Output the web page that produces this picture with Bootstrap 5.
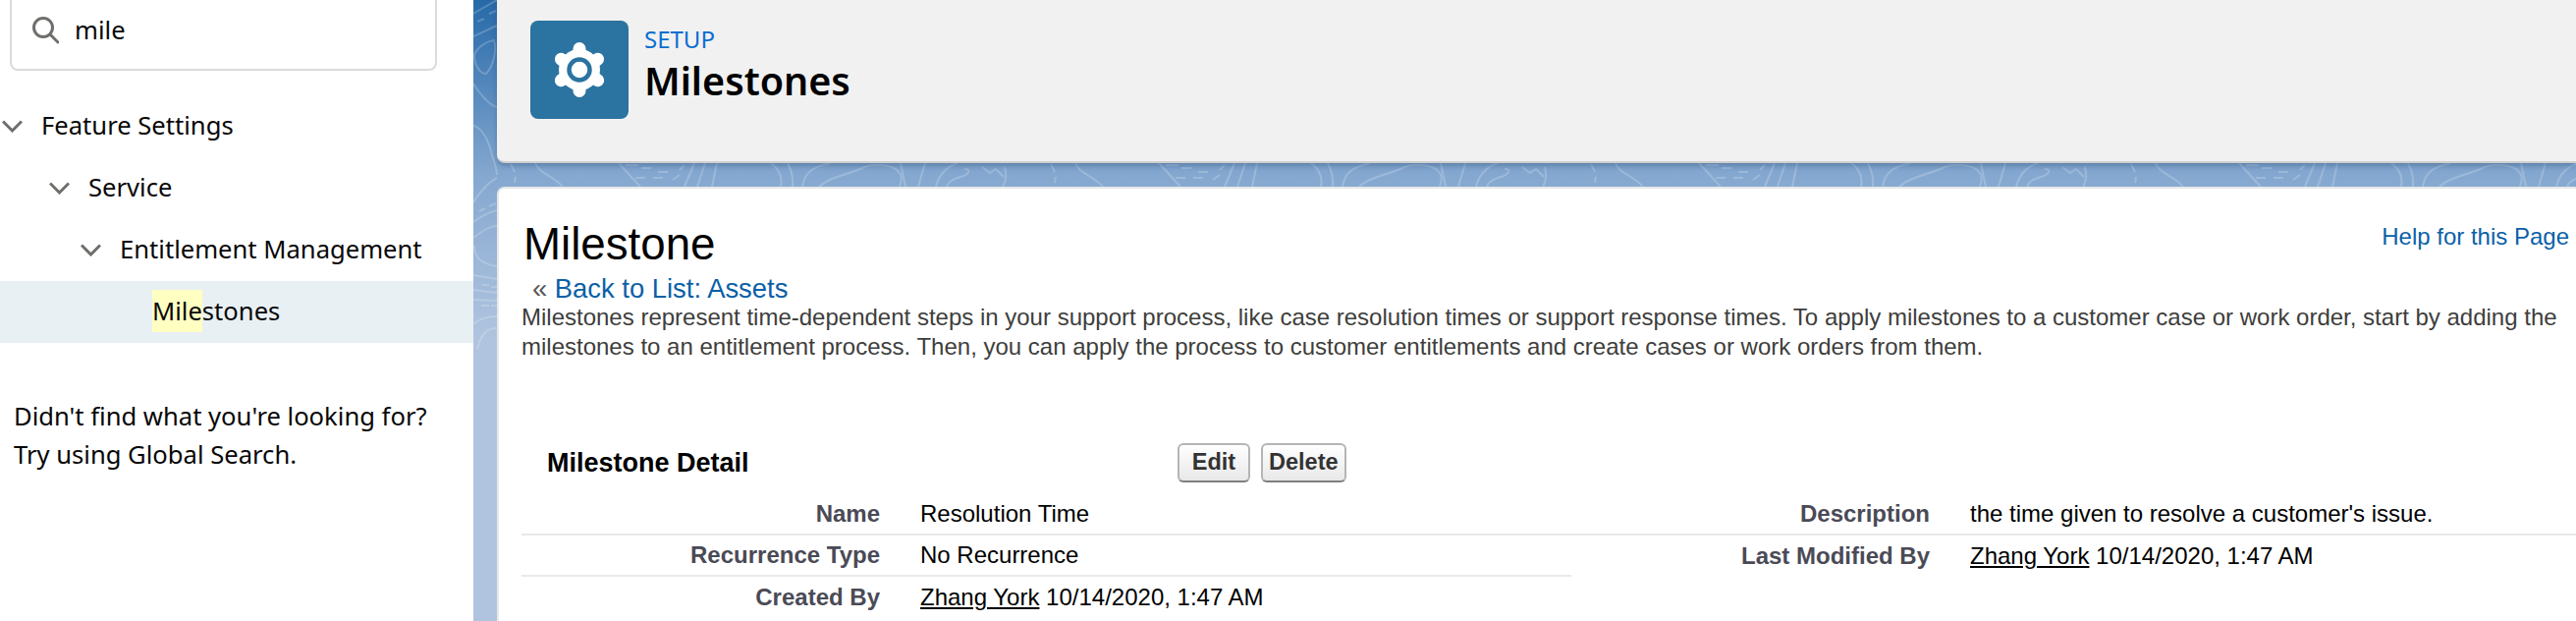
<!DOCTYPE html>
<html lang="en">
<head>
<meta charset="UTF-8">
<title>Milestones</title>
<link href="https://cdn.jsdelivr.net/npm/bootstrap@5.3.0/dist/css/bootstrap.min.css" rel="stylesheet">
<style>
html, body { height: 632px; overflow: hidden; background: #fff; }
body { font-family: "Noto Sans", sans-serif; color: #080707; }

/* left setup tree */
.side-panel { width: 482px; height: 632px; flex: none; font-size: 25.6px; overflow: hidden; }
.search-box { margin: -10px 37px 0 10px; height: 82px; border: 2px solid #dddbda; border-radius: 8px; padding: 0 0 0 20px; }
.search-box span { margin-left: 16px; }
.tree-list { margin-top: 25px; }
.tree-row { height: 63px; }
.tree-row svg { width: 21px; height: 13px; flex: none; margin-right: 19px; }
.lvl-1 { padding-left: 2px; }
.lvl-2 { padding-left: 50px; }
.lvl-3 { padding-left: 82px; }
.lvl-4 { padding-left: 155px; background: #e9f0f4; }
.hit { background: #ffffc2; padding: 4px 0; }
.no-result { margin: 55px 0 0 14px; line-height: 39px; }

/* blue backdrop */
.main-area { position: relative; min-width: 0; padding-left: 24px; background: linear-gradient(#2669a8 0, #85a8d0 180px, #b0c4df 345px); }
.topo { position: absolute; left: 0; top: 0; }
.page-head { position: relative; height: 166px; padding: 21px 0 0 34px; background: #f1f1f1; border-bottom: 2px solid #cfcfcf; border-bottom-left-radius: 8px; box-shadow: 0 3px 5px rgba(40, 70, 110, .35); }
.head-icon { width: 100px; height: 100px; background: #2b73a0; border-radius: 8px; flex: none; }
.head-text { margin-left: 16px; }
.head-kicker { font-size: 24px; line-height: 30px; color: #0a6ed1; margin-top: 4px; }
.head-title { font-size: 39.5px; line-height: 52px; font-weight: 600; color: #000; margin-top: 1px; }

.detail-page { position: relative; height: 442px; margin-top: 24px; padding: 32px 0 0 25px; background: #fff; border-top: 2px solid #e8e8e8; border-left: 2px solid #e8e8e8; border-top-left-radius: 8px; font-family: "Liberation Sans", Arial, sans-serif; }
.page-title { font-size: 45.7px; line-height: 50px; font-weight: 400; color: #000; margin: 0; }
.help-link { position: absolute; right: 7px; top: 31px; font-size: 24px; color: #0b5fa8; text-decoration: none; }
.back-line { font-size: 27.4px; line-height: 36px; color: #555; padding-left: 9px; margin-top: 2px; }
.back-line a { color: #0b5fa8; text-decoration: none; }
.page-intro { font-size: 24px; line-height: 30px; color: #3e3e3c; margin: -4px 14px 0 -2px; }
.detail-head { margin: 83px 0 0 24px; height: 40px; }
.detail-name { width: 642px; font-size: 27px; font-weight: 700; color: #000; }
.sf-btn { height: 40px; min-width: 74px; padding: 0 6px; font-size: 23.5px; font-weight: 700; color: #333; background: linear-gradient(#fff, #e8e8e8); border: 2px solid #b5b5b5; border-bottom-color: #7f7f7f; border-radius: 6px; line-height: 1; margin-right: 11px; }
.field-cols { margin: 12px 0 0 -2px; }
.field-col-l { width: 1069px; flex: none; }
.field-col-r { flex: 1; }
.field-row { height: 42px; font-size: 24px; color: #000; }
.field-row.ruled { border-bottom: 2px solid #e9e9e9; }
.field-label { width: 365px; flex: none; margin-right: 41px; text-align: right; font-weight: 700; color: #4a4a56; }
.field-row a { color: #000; }
</style>
</head>
<body>
<div class="d-flex">
  <aside class="side-panel">
    <div class="search-box d-flex align-items-center">
      <svg width="28" height="28" viewBox="0 0 28 28" fill="none" stroke="#706e6b" stroke-width="3"><circle cx="12" cy="11" r="9.5"/><path d="M19 18l8 8" stroke-linecap="round"/></svg>
      <span>mile</span>
    </div>
    <div class="tree-list">
      <div class="tree-row lvl-1 d-flex align-items-center"><svg viewBox="0 0 21 13" fill="none" stroke="#706e6b" stroke-width="3"><path d="M1 1.5l9.5 9.5 9.5-9.5"/></svg>Feature Settings</div>
      <div class="tree-row lvl-2 d-flex align-items-center"><svg viewBox="0 0 21 13" fill="none" stroke="#706e6b" stroke-width="3"><path d="M1 1.5l9.5 9.5 9.5-9.5"/></svg>Service</div>
      <div class="tree-row lvl-3 d-flex align-items-center"><svg viewBox="0 0 21 13" fill="none" stroke="#706e6b" stroke-width="3"><path d="M1 1.5l9.5 9.5 9.5-9.5"/></svg>Entitlement Management</div>
      <div class="tree-row lvl-4 d-flex align-items-center"><div><span class="hit">Mile</span>stones</div></div>
    </div>
    <div class="no-result">Didn't find what you're looking for?<br>Try using Global Search.</div>
  </aside>

  <main class="main-area flex-grow-1">
    <svg class="topo" width="2141" height="632" fill="none" stroke="#fff" stroke-opacity=".2" stroke-width="2">
      <defs>
        <pattern id="contours" x="0" y="0" width="550" height="632" patternUnits="userSpaceOnUse">
          <path d="M38 167l4 8M43 180l-1 6M63 166c3 10 20 14 28 24M148 166l22 24M155 168h13M171 171h10M188 175h10M165 181h10M183 181h10M203 183l7-5M210 173l5-5M225 166l-10 24M236 166l-8 24M248 166l-5 24M303 166c8 6 12 14 10 24M320 166c4 8 6 16 5 24M335 190c2-14 10-20 28-24M352 190c10-10 30-12 46-20 10-4 26-2 32 2 8 6 6 12 4 18M435 166l5 24M460 166l-7 24M471 190c3-12 10-20 22-24M482 190c2-6 8-8 14-10 8-2 12-8 4-8M518 170l8 6 6-4 8 8M541 170c2 8 2 14-2 20"/>
        </pattern>
      </defs>
      <rect x="24" y="166" width="2117" height="24" stroke="none" fill="url(#contours)"/>
      <path d="M0 14L24 0M4 22l7-3M16 14l7-3M0 37L24 26M1 56c3-8 12-14 20-15 3 8 0 26-8 34-6 0-12-8-12-19zM0 85c6 10 16 22 24 24M0 128c8 2 14 12 18 26 4 14 6 18 6 24M24 181c-10 5-20 18-24 25M6 215l6-3M16 210l7-3M0 226c8-6 16-10 24-12M0 242c8-6 16-12 24-12M1 250c0 12 6 18 23 21M0 280l24 4M0 295l24 3M8 290h8M18 292h6M0 305l24 1M8 311h8M18 311h6M0 330c6-6 14-8 24-8M4 355c4-16 10-21 20-21"/>
    </svg>
    <div class="page-head d-flex">
      <div class="head-icon d-flex align-items-center justify-content-center">
        <svg width="100" height="100" viewBox="0 0 100 100">
          <g stroke="#fff" stroke-width="13" stroke-linecap="round">
            <path d="M50 28.5V71.5M31.4 39.3L68.6 60.7M31.4 60.7L68.6 39.3"/>
          </g>
          <circle cx="50" cy="50" r="21" fill="#fff"/>
          <circle cx="50" cy="50" r="10.5" fill="#fff" stroke="#2b73a0" stroke-width="4.5"/>
        </svg>
      </div>
      <div class="head-text">
        <div class="head-kicker">SETUP</div>
        <div class="head-title">Milestones</div>
      </div>
    </div>

    <div class="detail-page">
      <a class="help-link" href="#">Help for this Page</a>
      <h1 class="page-title">Milestone</h1>
      <div class="back-line">« <a href="#">Back to List: Assets</a></div>
      <p class="page-intro">Milestones represent time-dependent steps in your support process, like case resolution times or support response times. To apply milestones to a customer case or work order, start by adding the milestones to an entitlement process. Then, you can apply the process to customer entitlements and create cases or work orders from them.</p>
      <div class="detail-head d-flex align-items-center">
        <div class="detail-name">Milestone Detail</div>
        <button class="sf-btn" type="button">Edit</button>
        <button class="sf-btn" type="button">Delete</button>
      </div>
      <div class="field-cols d-flex">
        <div class="field-col-l">
          <div class="field-row ruled d-flex align-items-center"><div class="field-label">Name</div><div>Resolution Time</div></div>
          <div class="field-row ruled d-flex align-items-center"><div class="field-label">Recurrence Type</div><div>No Recurrence</div></div>
          <div class="field-row d-flex align-items-center"><div class="field-label">Created By</div><div><a href="#">Zhang York</a> 10/14/2020, 1:47 AM</div></div>
        </div>
        <div class="field-col-r">
          <div class="field-row ruled d-flex align-items-center"><div class="field-label">Description</div><div>the time given to resolve a customer's issue.</div></div>
          <div class="field-row d-flex align-items-center"><div class="field-label">Last Modified By</div><div><a href="#">Zhang York</a> 10/14/2020, 1:47 AM</div></div>
        </div>
      </div>
    </div>
  </main>
</div>
<script src="https://cdn.jsdelivr.net/npm/bootstrap@5.3.0/dist/js/bootstrap.bundle.min.js"></script>
</body>
</html>
